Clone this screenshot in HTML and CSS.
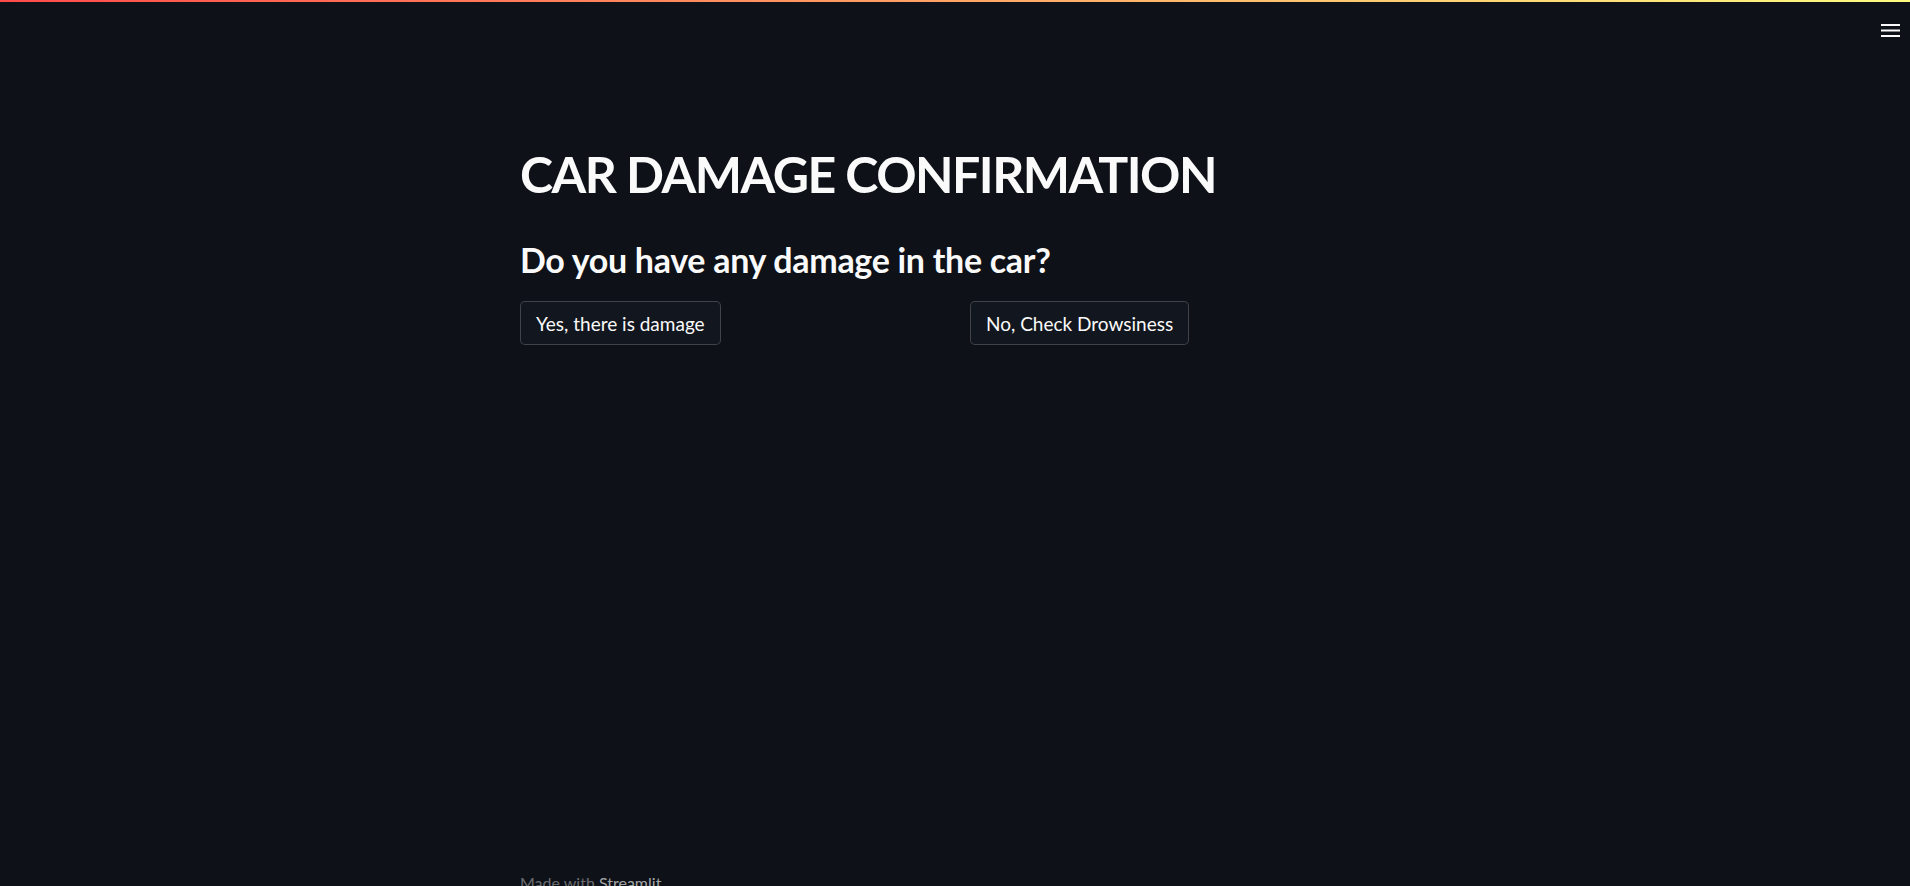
FILE: index.html
```html
<!DOCTYPE html>
<html lang="en">
<head>
<meta charset="utf-8">
<title>Car Damage Confirmation</title>
<link rel="stylesheet" href="styles.css">
</head>
<body>
<div class="app">
  <div class="decoration"></div>
  <header class="header">
    <button class="menu-btn" aria-label="Menu">
      <svg width="19" height="13" viewBox="0 0 19 13" aria-hidden="true">
        <rect x="0" y="0" width="19" height="2" fill="#fafafa"/>
        <rect x="0" y="5.5" width="19" height="2" fill="#fafafa"/>
        <rect x="0" y="11" width="19" height="2" fill="#fafafa"/>
      </svg>
    </button>
  </header>
  <main class="main">
    <div class="block">
      <h1 class="title">CAR DAMAGE CONFIRMATION</h1>
      <h3 class="subheader">Do you have any damage in the car?</h3>
      <div class="columns">
        <div class="col"><button class="btn">Yes, there is damage</button></div>
        <div class="col"><button class="btn">No, Check Drowsiness</button></div>
      </div>
    </div>
  </main>
  <footer class="footer">
    <div class="block footer-text">Made with <span class="footer-link">Streamlit</span></div>
  </footer>
</div>
</body>
</html>
```

FILE: styles.css
```css
html, body {
  margin: 0;
  padding: 0;
  background: #0e1117;
}
body {
  font-family: Lato, "Open Sans", "Noto Sans", sans-serif;
  color: #fafafa;
}
.app {
  height: 886px;
  overflow: hidden;
  display: flex;
  flex-direction: column;
}
.decoration {
  height: 2px;
  flex-shrink: 0;
  background: linear-gradient(90deg, rgb(255, 75, 75), rgb(255, 253, 128));
}
.header {
  height: 58px;
  flex-shrink: 0;
  display: flex;
  justify-content: flex-end;
  align-items: flex-start;
  padding-right: 10px;
}
.menu-btn {
  margin-top: 22px;
  padding: 0;
  border: 0;
  background: transparent;
  line-height: 0;
  cursor: pointer;
}
.main {
  flex: 1;
  padding-top: 84px;
}
.block {
  width: 880px;
  margin-left: calc(50% - 435px);
}
.title {
  margin: 0;
  font-size: 50px;
  line-height: 60px;
  font-weight: 700;
  letter-spacing: -1.5px;
}
.subheader {
  margin: 36px 0 0;
  font-size: 34px;
  line-height: 40px;
  font-weight: 700;
  letter-spacing: -0.3px;
}
.columns {
  margin-top: 21px;
  display: grid;
  grid-template-columns: 1fr 1fr;
  gap: 20px;
}
.col {
  display: flex;
  align-items: flex-start;
}
.btn {
  height: 44px;
  padding: 0 15px;
  border: 1px solid rgba(250, 250, 250, 0.2);
  border-radius: 5px;
  background: #12161e;
  color: #fafafa;
  font-family: Lato, "Open Sans", sans-serif;
  font-size: 19px;
  font-weight: 400;
  cursor: pointer;
}
.footer {
  height: 16px;
  flex-shrink: 0;
}
.footer-text {
  font-size: 16px;
  line-height: 25.6px;
  color: rgba(250, 250, 250, 0.4);
}
.footer-link {
  color: rgba(250, 250, 250, 0.65);
}
```
